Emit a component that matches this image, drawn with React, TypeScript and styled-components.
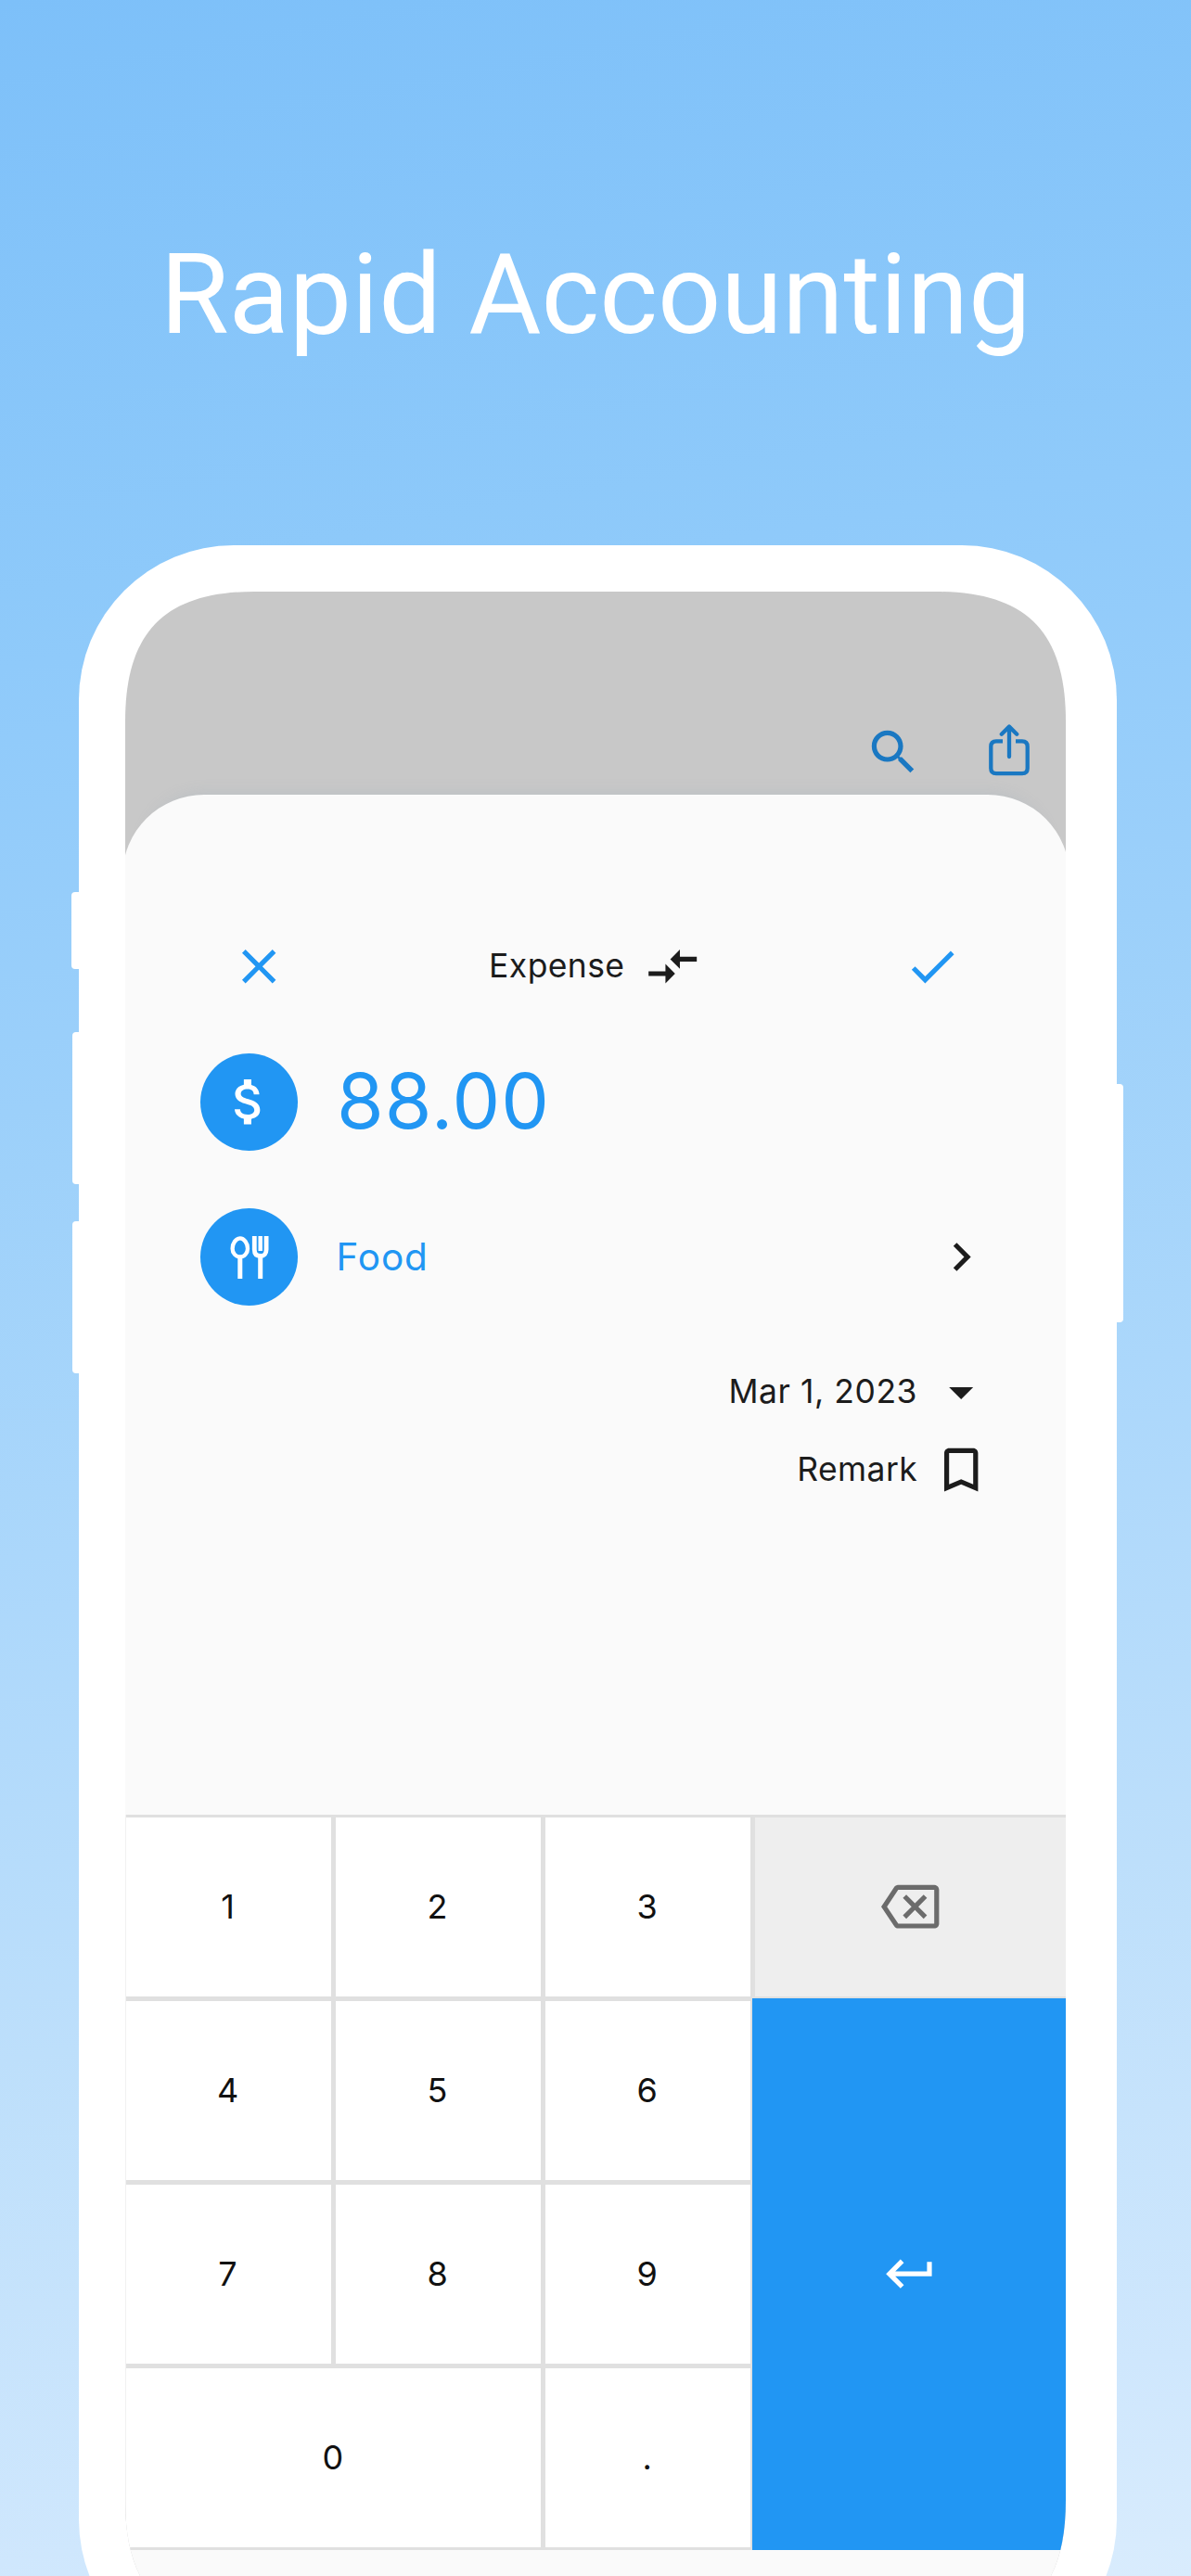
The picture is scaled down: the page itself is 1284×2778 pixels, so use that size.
import React from 'react';
import styled, { createGlobalStyle, css } from 'styled-components';

const BLUE = '#2196f3';
const INK = '#1c1c1c';
const LINE = '#e0e0e0';

const GlobalStyle = createGlobalStyle`
  * { box-sizing: border-box; }
  html, body { margin: 0; padding: 0; }
  body { width: 1284px; height: 2778px; overflow: hidden; }
`;

const Page = styled.main`
  width: 1284px;
  height: 2778px;
  overflow: hidden;
  display: flex;
  flex-direction: column;
  background: linear-gradient(
    170deg,
    #7dc0f9 0%,
    #8fcafa 24%,
    #9cd0fa 40%,
    #abd7fb 56%,
    #bddffb 74%,
    #cfe7fd 92%,
    #d9ecfd 100%
  );
  font-family: Inter, "Noto Sans", sans-serif;
  font-weight: 370;
  color: ${INK};
`;

const Title = styled.h1`
  margin: 0;
  height: 588px;
  flex: none;
  padding-top: 248px;
  font: 400 120px/141px Roboto, sans-serif;
  letter-spacing: -0.1px;
  text-align: center;
  white-space: nowrap;
  color: #fff;
`;

const Phone = styled.div`
  position: relative;
  flex: none;
  width: 1119.2px;
  height: 2296px;
  margin-left: 84.5px;
  padding: 50px 55px 48px 50.5px;
  border-radius: 167px;
  background: #fff;
`;

const SideButton = styled.span<{ $side: 'left' | 'right'; $top: number; $height: number; $out: number }>`
  position: absolute;
  top: ${(p) => p.$top}px;
  ${(p) => p.$side}: -${(p) => p.$out}px;
  width: 30px;
  height: ${(p) => p.$height}px;
  border-radius: ${(p) => (p.$side === 'left' ? '4px 0 0 4px' : '0 4px 4px 0')};
  background: #fff;
`;

const Screen = styled.div`
  width: 1014px;
  height: 2198px;
  display: flex;
  flex-direction: column;
  background: #c8c8c8;
  clip-path: path(
    "M0 140 C0 43 43 0 140 0 H874 C971 0 1014 43 1014 140 V2058 C1014 2155 971 2198 874 2198 H140 C43 2198 0 2155 0 2058 Z"
  );
`;

const Toolbar = styled.header`
  flex: none;
  height: 219px;
  display: flex;
  justify-content: flex-end;
  align-items: flex-start;
  gap: 71.5px;
  padding: 142px 39px 0 0;
  color: #1a78c2;
`;

const Sheet = styled.section`
  flex: 1;
  margin: 0 -3.5px;
  display: flex;
  flex-direction: column;
  background: #fafafa;
  border-radius: 88px 88px 0 0;
  box-shadow: 0 -24px 16px -24px rgba(150, 170, 185, 0.3);
`;

const Form = styled.div`
  flex: none;
  height: 1100px;
  padding: 153px 3.5px 0;
  display: flex;
  flex-direction: column;
`;

const SheetHeader = styled.div`
  height: 64px;
  padding: 0 113px;
  display: flex;
  align-items: center;
  justify-content: space-between;
  color: ${BLUE};
`;

const TypeSwitch = styled.div`
  display: flex;
  align-items: center;
  gap: 21px;
  font-size: 35.5px;
  letter-spacing: 0.4px;
  color: ${INK};
`;

const Field = styled.div<{ $gap: number }>`
  height: 105px;
  margin-top: ${(p) => p.$gap}px;
  padding: 0 82px 0 81px;
  display: flex;
  align-items: center;
`;

const Badge = styled.span`
  width: 105px;
  height: 105px;
  flex: none;
  display: grid;
  place-items: center;
  border-radius: 50%;
  background: ${BLUE};
  color: #fff;
`;

const Amount = styled.span`
  margin-left: 42px;
  padding-bottom: 1px;
  font-size: 82px;
  line-height: 98px;
  letter-spacing: 1.1px;
  color: ${BLUE};
`;

const Category = styled.span`
  flex: 1;
  margin-left: 41.5px;
  font-size: 40.5px;
  letter-spacing: 0.9px;
  color: ${BLUE};
`;

const MetaRow = styled.div<{ $gap: number; $spacing: number }>`
  height: 62px;
  margin-top: ${(p) => p.$gap}px;
  padding-right: 81.5px;
  display: flex;
  align-items: center;
  justify-content: flex-end;
  gap: 16px;
  font-size: 35.5px;
  letter-spacing: ${(p) => p.$spacing}px;
`;

const MetaText = styled.span`
  padding-bottom: 1px;
`;

const Keypad = styled.div`
  flex: none;
  height: 793px;
  margin: 0 3.5px;
  padding: 3px 0;
  display: grid;
  grid-template-columns: 220.6px 221.4px 221px 1fr;
  grid-template-rows: repeat(4, 193px);
  gap: 5px;
  border-left: 1px solid #f1f1f1;
  background: ${LINE};
`;

const Key = styled.button<{ $wide?: boolean; $tone?: 'delete' | 'enter' }>`
  margin: 0;
  padding: 0 1.5px 2px 0;
  border: 0;
  display: flex;
  align-items: center;
  justify-content: center;
  font: 370 36px Inter, sans-serif;
  color: #111;
  background: #fff;
  ${(p) => p.$wide && css`grid-column: span 2;`}
  ${(p) =>
    p.$tone === 'delete' &&
    css`
      padding: 0;
      background: #eeeeee;
      color: #6b6b6b;
    `}
  ${(p) =>
    p.$tone === 'enter' &&
    css`
      grid-column: 4;
      grid-row: 2 / span 3;
      margin: -3px 0 -3px -3px;
      padding: 0 0 0 3px;
      background: ${BLUE};
      color: #fff;
    `}
`;

const Glyph = styled.svg<{ $size?: number }>`
  display: block;
  flex: none;
  width: ${(p) => p.$size ?? 62.4}px;
  height: ${(p) => p.$size ?? 62.4}px;
  fill: currentColor;
`;

const ShareGlyph = styled.svg`
  display: block;
  width: 44px;
  height: 56px;
  margin-top: 0.5px;
  fill: none;
  stroke: currentColor;
  stroke-width: 4.3;
`;

const CutleryGlyph = styled.svg`
  width: 42px;
  height: 46px;
  fill: none;
  stroke: currentColor;
  stroke-width: 5;
`;

const Icon = ({ d, size }: { d: string; size?: number }) => (
  <Glyph viewBox="0 0 24 24" $size={size}>
    <path d={d} />
  </Glyph>
);

const paths = {
  search:
    'M15.5 14h-.79l-.28-.27C15.41 12.59 16 11.11 16 9.5 16 5.91 13.09 3 9.5 3S3 5.91 3 9.5 5.91 16 9.5 16c1.61 0 3.09-.59 4.23-1.57l.27.28v.79l5 4.99L20.49 19l-4.99-5zm-6 0C7.01 14 5 11.99 5 9.5S7.01 5 9.5 5 14 7.01 14 9.5 11.99 14 9.5 14z',
  close: 'M19 6.41 17.59 5 12 10.59 6.41 5 5 6.41 10.59 12 5 17.59 6.41 19 12 13.41 17.59 19 19 17.59 13.41 12z',
  check: 'M9 16.17 4.83 12l-1.42 1.41L9 19 21 7l-1.41-1.41z',
  compare: 'M9.01 14H2v2h7.01v3L13 15l-3.99-4v3zm5.98-1v-3H22V8h-7.01V5L11 9l3.99 4z',
  money:
    'M11.8 10.9c-2.27-.59-3-1.2-3-2.15 0-1.09 1.01-1.85 2.7-1.85 1.78 0 2.44.85 2.5 2.1h2.21c-.07-1.72-1.12-3.3-3.21-3.81V3h-3v2.16c-1.94.42-3.5 1.68-3.5 3.61 0 2.31 1.91 3.46 4.7 4.13 2.5.6 3 1.48 3 2.41 0 .69-.49 1.79-2.7 1.79-2.06 0-2.87-.92-2.98-2.1h-2.2c.12 2.19 1.76 3.42 3.68 3.83V21h3v-2.15c1.95-.37 3.5-1.5 3.5-3.55 0-2.84-2.43-3.81-4.7-4.4z',
  chevron: 'M10 6 8.59 7.41 13.17 12l-4.58 4.59L10 18l6-6z',
  dropdown: 'm7 10 5 5 5-5z',
  bookmark: 'M17 3H7c-1.1 0-1.99.9-1.99 2L5 21l7-3 7 3V5c0-1.1-.9-2-2-2zm0 15-5-2.18L7 18V5h10v13z',
  backspace:
    'M22 3H7c-.69 0-1.23.35-1.59.88L0 12l5.41 8.11c.36.53.9.89 1.59.89h15c1.1 0 2-.9 2-2V5c0-1.1-.9-2-2-2zm0 16H7.07L2.4 12l4.66-7H22v14zm-11.59-2L14 13.41 17.59 17 19 15.59 15.41 12 19 8.41 17.59 7 14 10.59 10.41 7 9 8.41 12.59 12 9 15.59z',
  enter: 'M19 7v4H5.83l3.58-3.59L8 6l-6 6 6 6 1.41-1.41L5.83 13H21V7z',
};

const ShareIcon = () => (
  <ShareGlyph viewBox="0 0 44 56">
    <path d="M15 18.3H8Q2.3 18.3 2.3 24V47.5Q2.3 53.2 8 53.2H36Q41.7 53.2 41.7 47.5V24Q41.7 18.3 36 18.3H29" />
    <path d="M22 35V3M13.8 10.7 22 2.6 30.2 10.7" strokeLinecap="round" strokeLinejoin="round" />
  </ShareGlyph>
);

const CutleryIcon = () => (
  <CutleryGlyph viewBox="0 0 42 46">
    <path d="M10.8 2.4C6.3 2.4 2.6 8 2.6 13.4C2.6 18.6 6.3 22.4 10.8 22.4S19 18.6 19 13.4C19 8 15.3 2.4 10.8 2.4Z" strokeWidth="4.3" />
    <path d="M10.8 22V46" />
    <path d="M26.3 0V14.5Q26.3 21.5 32.7 21.5T39.1 14.5V0" strokeWidth="4.8" />
    <path d="M32.7 0V16" strokeWidth="4.4" />
    <path d="M32.7 21V46" />
  </CutleryGlyph>
);

export default function App() {
  return (
    <>
      <GlobalStyle />
      <Page>
        <Title>Rapid Accounting</Title>
        <Phone>
          <SideButton $side="left" $top={373.5} $height={83} $out={8} />
          <SideButton $side="left" $top={525} $height={164} $out={7} />
          <SideButton $side="left" $top={729} $height={164} $out={7} />
          <SideButton $side="right" $top={580.5} $height={257} $out={7} />
          <Screen>
            <Toolbar>
              <Icon d={paths.search} />
              <ShareIcon />
            </Toolbar>
            <Sheet>
              <Form>
                <SheetHeader>
                  <Icon d={paths.close} />
                  <TypeSwitch>
                    Expense
                    <Icon d={paths.compare} />
                  </TypeSwitch>
                  <Icon d={paths.check} />
                </SheetHeader>
                <Field $gap={62}>
                  <Badge>
                    <Icon d={paths.money} size={64.5} />
                  </Badge>
                  <Amount>88.00</Amount>
                </Field>
                <Field $gap={62}>
                  <Badge>
                    <CutleryIcon />
                  </Badge>
                  <Category>Food</Category>
                  <Icon d={paths.chevron} size={61} />
                </Field>
                <MetaRow $gap={62} $spacing={0.55}>
                  <MetaText>Mar 1, 2023</MetaText>
                  <Icon d={paths.dropdown} />
                </MetaRow>
                <MetaRow $gap={22} $spacing={0.4}>
                  <MetaText>Remark</MetaText>
                  <Icon d={paths.bookmark} />
                </MetaRow>
              </Form>
              <Keypad>
                <Key>1</Key>
                <Key>2</Key>
                <Key>3</Key>
                <Key $tone="delete">
                  <Icon d={paths.backspace} />
                </Key>
                <Key>4</Key>
                <Key>5</Key>
                <Key>6</Key>
                <Key $tone="enter">
                  <Icon d={paths.enter} />
                </Key>
                <Key>7</Key>
                <Key>8</Key>
                <Key>9</Key>
                <Key $wide>0</Key>
                <Key>.</Key>
              </Keypad>
            </Sheet>
          </Screen>
        </Phone>
      </Page>
    </>
  );
}
